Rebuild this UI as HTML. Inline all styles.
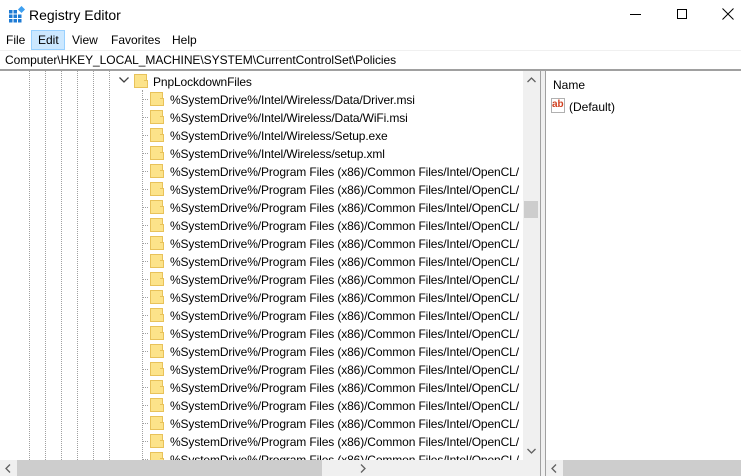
<!DOCTYPE html>
<html><head><style>
*{margin:0;padding:0;box-sizing:border-box}
body{width:741px;height:476px;overflow:hidden;background:#fff;font-family:"Liberation Sans",sans-serif;font-size:12px;color:#000;position:relative}
.abs{position:absolute}
.dl{position:absolute;top:71px;height:389px;width:0;border-left:1px dotted #a0a0a0}
.row{position:absolute;left:0;height:18px;width:523px;white-space:nowrap;overflow:hidden}
.row .h{position:absolute;left:142px;top:9px;width:6px;border-top:1px dotted #a0a0a0}
.row .f{position:absolute;left:150px;top:2px;width:13px;height:14px;background:#fce38a;border:1px solid #e8c25a}
.row .f:after{content:"";position:absolute;right:-2px;bottom:-1px;width:3px;height:6px;background:#fce38a;border:1px solid #e8c25a;border-left:none}
.row .t{position:absolute;left:170px;top:3px;font-size:12px;letter-spacing:-0.12px}
</style></head><body>
<svg class="abs" style="left:8px;top:6px" width="18" height="18" viewBox="0 0 18 18">
<g fill="#1e7bd4"><rect x="1" y="4" width="3.5" height="3.5"/><rect x="5.5" y="4" width="3.5" height="3.5"/><rect x="1" y="8.5" width="3.5" height="3.5"/><rect x="5.5" y="8.5" width="3.5" height="3.5"/><rect x="10" y="8.5" width="3.5" height="3.5"/><rect x="1" y="13" width="3.5" height="3.5"/><rect x="5.5" y="13" width="3.5" height="3.5"/><rect x="10" y="13" width="3.5" height="3.5"/></g>
<rect x="11" y="1" width="5" height="5" fill="#3fa0f0" transform="rotate(45 13.5 3.5)"/></svg>
<div class="abs" style="left:29px;top:7px;font-size:14px">Registry Editor</div>
<div class="abs" style="left:630px;top:14px;width:11px;border-top:1px solid #000"></div>
<div class="abs" style="left:677px;top:9px;width:10px;height:10px;border:1px solid #000"></div>
<svg class="abs" style="left:722px;top:8px" width="12" height="12"><path d="M0.5 0.5L11.5 11.5M11.5 0.5L0.5 11.5" stroke="#000"/></svg>
<div class="abs" style="left:31px;top:30px;width:34px;height:20px;background:#cce8ff;border:1px solid #99d1ff"></div>
<div class="abs" style="left:6px;top:33px">File</div>
<div class="abs" style="left:38px;top:33px">Edit</div>
<div class="abs" style="left:72px;top:33px">View</div>
<div class="abs" style="left:111px;top:33px">Favorites</div>
<div class="abs" style="left:172px;top:33px">Help</div>
<div class="abs" style="left:0;top:50px;width:741px;border-top:1px solid #f0f0f0"></div>
<div class="abs" style="left:5px;top:53px;letter-spacing:-0.05px">Computer\HKEY_LOCAL_MACHINE\SYSTEM\CurrentControlSet\Policies</div>
<div class="abs" style="left:0;top:69px;width:741px;height:2px;background:#a0a0a0"></div>
<div class="dl" style="left:29px"></div><div class="dl" style="left:45px"></div><div class="dl" style="left:61px"></div><div class="dl" style="left:77px"></div><div class="dl" style="left:93px"></div><div class="dl" style="left:109px"></div>
<div class="dl" style="left:142px;top:90px;height:370px"></div>
<svg class="abs" style="left:119px;top:77px" width="10" height="7"><path d="M0.5 0.5L5 5L9.5 0.5" stroke="#404040" fill="none" stroke-width="1.3"/></svg>
<div class="row" style="top:72px"><div class="f" style="left:134px"></div><div class="t" style="left:153px">PnpLockdownFiles</div></div>
<div class="row" style="top:90px"><div class="h"></div><div class="f"></div><div class="t">%SystemDrive%/Intel/Wireless/Data/Driver.msi</div></div>
<div class="row" style="top:108px"><div class="h"></div><div class="f"></div><div class="t">%SystemDrive%/Intel/Wireless/Data/WiFi.msi</div></div>
<div class="row" style="top:126px"><div class="h"></div><div class="f"></div><div class="t">%SystemDrive%/Intel/Wireless/Setup.exe</div></div>
<div class="row" style="top:144px"><div class="h"></div><div class="f"></div><div class="t">%SystemDrive%/Intel/Wireless/setup.xml</div></div>
<div class="row" style="top:162px"><div class="h"></div><div class="f"></div><div class="t">%SystemDrive%/Program Files (x86)/Common Files/Intel/OpenCL/</div></div>
<div class="row" style="top:180px"><div class="h"></div><div class="f"></div><div class="t">%SystemDrive%/Program Files (x86)/Common Files/Intel/OpenCL/</div></div>
<div class="row" style="top:198px"><div class="h"></div><div class="f"></div><div class="t">%SystemDrive%/Program Files (x86)/Common Files/Intel/OpenCL/</div></div>
<div class="row" style="top:216px"><div class="h"></div><div class="f"></div><div class="t">%SystemDrive%/Program Files (x86)/Common Files/Intel/OpenCL/</div></div>
<div class="row" style="top:234px"><div class="h"></div><div class="f"></div><div class="t">%SystemDrive%/Program Files (x86)/Common Files/Intel/OpenCL/</div></div>
<div class="row" style="top:252px"><div class="h"></div><div class="f"></div><div class="t">%SystemDrive%/Program Files (x86)/Common Files/Intel/OpenCL/</div></div>
<div class="row" style="top:270px"><div class="h"></div><div class="f"></div><div class="t">%SystemDrive%/Program Files (x86)/Common Files/Intel/OpenCL/</div></div>
<div class="row" style="top:288px"><div class="h"></div><div class="f"></div><div class="t">%SystemDrive%/Program Files (x86)/Common Files/Intel/OpenCL/</div></div>
<div class="row" style="top:306px"><div class="h"></div><div class="f"></div><div class="t">%SystemDrive%/Program Files (x86)/Common Files/Intel/OpenCL/</div></div>
<div class="row" style="top:324px"><div class="h"></div><div class="f"></div><div class="t">%SystemDrive%/Program Files (x86)/Common Files/Intel/OpenCL/</div></div>
<div class="row" style="top:342px"><div class="h"></div><div class="f"></div><div class="t">%SystemDrive%/Program Files (x86)/Common Files/Intel/OpenCL/</div></div>
<div class="row" style="top:360px"><div class="h"></div><div class="f"></div><div class="t">%SystemDrive%/Program Files (x86)/Common Files/Intel/OpenCL/</div></div>
<div class="row" style="top:378px"><div class="h"></div><div class="f"></div><div class="t">%SystemDrive%/Program Files (x86)/Common Files/Intel/OpenCL/</div></div>
<div class="row" style="top:396px"><div class="h"></div><div class="f"></div><div class="t">%SystemDrive%/Program Files (x86)/Common Files/Intel/OpenCL/</div></div>
<div class="row" style="top:414px"><div class="h"></div><div class="f"></div><div class="t">%SystemDrive%/Program Files (x86)/Common Files/Intel/OpenCL/</div></div>
<div class="row" style="top:432px"><div class="h"></div><div class="f"></div><div class="t">%SystemDrive%/Program Files (x86)/Common Files/Intel/OpenCL/</div></div>
<div class="row" style="top:450px;height:10px"><div class="h"></div><div class="f"></div><div class="t">%SystemDrive%/Program Files (x86)/Common Files/Intel/OpenCL/</div></div>
<div class="abs" style="left:523px;top:71px;width:17px;height:389px;background:#f0f0f0"></div>
<div class="abs" style="left:524px;top:201px;width:14px;height:17px;background:#cdcdcd"></div>
<svg class="abs" style="left:527px;top:77px" width="9" height="6"><path d="M0.5 5L4.5 1L8.5 5" stroke="#606060" fill="none" stroke-width="1.3"/></svg>
<svg class="abs" style="left:527px;top:448px" width="9" height="6"><path d="M0.5 1L4.5 5L8.5 1" stroke="#606060" fill="none" stroke-width="1.3"/></svg>
<div class="abs" style="left:0;top:460px;width:540px;height:16px;background:#f0f0f0"></div>
<div class="abs" style="left:17px;top:460px;width:305px;height:16px;background:#cdcdcd"></div>
<svg class="abs" style="left:5px;top:464px" width="6" height="9"><path d="M5 0.5L1 4.5L5 8.5" stroke="#606060" fill="none" stroke-width="1.3"/></svg>
<svg class="abs" style="left:360px;top:464px" width="6" height="9"><path d="M1 0.5L5 4.5L1 8.5" stroke="#606060" fill="none" stroke-width="1.3"/></svg>
<div class="abs" style="left:540px;top:71px;width:6px;height:405px;background:#f0f0f0;border-left:1px solid #a0a0a0;border-right:1px solid #a0a0a0"></div>
<div class="abs" style="left:553px;top:78px">Name</div>
<div class="abs" style="left:551px;top:98px;width:14px;height:15px;border:1px solid #b0b0b0;background:#fff"></div>
<div class="abs" style="left:552px;top:99px;font-size:10px;font-weight:bold;color:#d04020">ab</div>
<div class="abs" style="left:569px;top:100px">(Default)</div>
<div class="abs" style="left:546px;top:460px;width:195px;height:16px;background:#f0f0f0"></div>
<div class="abs" style="left:563px;top:460px;width:178px;height:16px;background:#cdcdcd"></div>
<svg class="abs" style="left:551px;top:464px" width="6" height="9"><path d="M5 0.5L1 4.5L5 8.5" stroke="#606060" fill="none" stroke-width="1.3"/></svg>
</body></html>
